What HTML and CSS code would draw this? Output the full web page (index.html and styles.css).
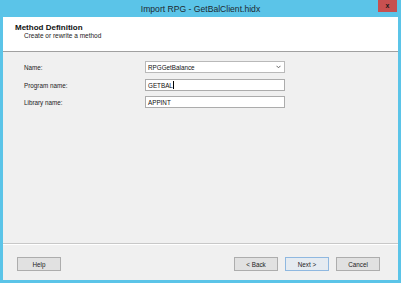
FILE: index.html
```html
<!DOCTYPE html>
<html lang="en">
<head>
    <meta charset="UTF-8">
    <title>Import RPG - GetBalClient.hidx</title>
    <link rel="stylesheet" href="styles.css">
</head>
<body>
    <div class="window">
        <div class="titlebar">
            <span class="title">Import RPG - GetBalClient.hidx</span>
            <div class="close">x</div>
        </div>
        <div class="client">
            <div class="header">
                <div class="heading">Method Definition</div>
                <div class="subheading">Create or rewrite a method</div>
            </div>

            <div class="form">
                <div class="row row-combo">
                    <span class="label">Name:</span>
                    <div class="field combo">
                        <span>RPGGetBalance</span>
                        <svg class="arrow" width="5" height="4" viewBox="0 0 5 4">
                            <polyline points="0.5,0.8 2.5,2.8 4.5,0.8" fill="none" stroke="#666" stroke-width="1"/>
                        </svg>
                    </div>
                </div>
                <div class="row">
                    <span class="label">Program name:</span>
                    <div class="field"><span>GETBAL</span><span class="caret"></span></div>
                </div>
                <div class="row">
                    <span class="label">Library name:</span>
                    <div class="field"><span>APPINT</span></div>
                </div>
            </div>

            <div class="footer">
                <button class="btn">Help</button>
                <div class="spacer"></div>
                <button class="btn">&lt; Back</button>
                <button class="btn btn-default">Next &gt;</button>
                <button class="btn">Cancel</button>
            </div>
        </div>
    </div>
</body>
</html>
```

FILE: styles.css
```css
body {
    margin: 0;
    font-family: "Liberation Sans", Arial, sans-serif;
}
.window {
    width: 401px;
    height: 283px;
    background: #5bc4e8;
    padding: 0 3px 3px 3px;
    box-sizing: border-box;
    display: flex;
    flex-direction: column;
}
.titlebar {
    height: 17px;
    display: grid;
    grid-template-columns: 1fr auto 1fr;
    align-items: center;
}
.title {
    grid-column: 2;
    font-size: 8.6px;
    color: #1e2a30;
}
.close {
    grid-column: 3;
    justify-self: end;
    align-self: start;
    width: 19px;
    height: 12px;
    margin-right: 1px;
    background: #c75050;
    color: #1a1a1a;
    font-size: 7px;
    font-weight: bold;
    line-height: 11px;
    text-align: center;
}
.client {
    flex: 1;
    background: #f0f0f0;
    display: flex;
    flex-direction: column;
}
.header {
    height: 35px;
    box-sizing: border-box;
    background: #fff;
    border-bottom: 1px solid #a0a0a0;
    padding: 6px 0 0 12px;
}
.heading {
    font-size: 8px;
    font-weight: bold;
    color: #111;
    line-height: 9px;
}
.subheading {
    font-size: 6.5px;
    color: #222;
    padding-left: 9px;
    line-height: 8px;
}
.form {
    flex: 1;
    padding: 9px 0 0 21px;
    display: flex;
    flex-direction: column;
    gap: 5px;
}
.row {
    display: flex;
    align-items: center;
}
.row-combo {
    margin-bottom: 1px;
}
.label {
    width: 121px;
    font-size: 6.3px;
    color: #222;
}
.field {
    width: 140px;
    height: 12px;
    box-sizing: border-box;
    background: #fff;
    border: 1px solid #acacac;
    font-size: 6.3px;
    color: #111;
    padding-left: 2px;
    display: flex;
    align-items: center;
}
.combo {
    border-color: #b9b9b9;
    justify-content: space-between;
    padding-right: 3px;
}
.caret {
    width: 1px;
    height: 8px;
    background: #000;
}
.footer {
    height: 37px;
    box-sizing: border-box;
    border-top: 1px solid #c8c8c8;
    box-shadow: inset 0 1px 0 #fff;
    display: flex;
    align-items: flex-start;
    padding: 13px 18px 0 14px;
    gap: 7px;
}
.spacer {
    flex: 1;
}
.btn {
    width: 44px;
    height: 14px;
    padding: 0;
    background: #e1e1e1;
    border: 1px solid #adadad;
    font-family: "Liberation Sans", Arial, sans-serif;
    font-size: 6.3px;
    color: #222;
}
.btn-default {
    border-color: #8fb8e0;
    background: #e5ebf1;
}
```
